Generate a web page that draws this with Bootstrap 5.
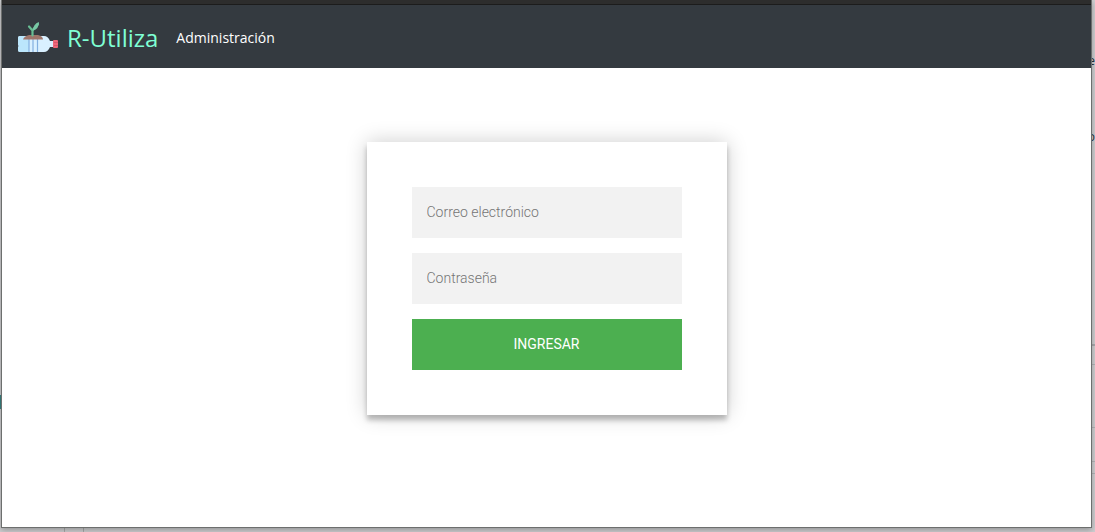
<!DOCTYPE html>
<html lang="es">
<head>
<meta charset="utf-8">
<meta name="viewport" content="width=device-width, initial-scale=1">
<title>R-Utiliza</title>
<link href="https://cdn.jsdelivr.net/npm/bootstrap@5.3.0/dist/css/bootstrap.min.css" rel="stylesheet">
<style>
  body { background: #cfcfd1; font-family: "Open Sans", "Noto Sans", sans-serif; }
  .desk { padding: 0 3px 4px 1px;
    background: linear-gradient(#3a8583, #3a8583) 0 395px / 2px 14px no-repeat,
      linear-gradient(#aaabae, #aaabae) 100% 344px / 4px 2px no-repeat,
      linear-gradient(#b4b4b7, #b4b4b7) 100% 364px / 4px 1px no-repeat,
      linear-gradient(#b4b4b7, #b4b4b7) 100% 427px / 4px 1px no-repeat,
      linear-gradient(#b4b4b7, #b4b4b7) 100% 461px / 4px 1px no-repeat,
      linear-gradient(#b4b4b7, #b4b4b7) 100% 473px / 4px 1px no-repeat,
      linear-gradient(#aaa, #aaa) 64px 100% / 1px 4px no-repeat,
      linear-gradient(#aaa, #aaa) 83px 100% / 1px 4px no-repeat; }
  .desk-letter { right: 0; font-size: 12px; line-height: 16px; color: #25313c; }
  .letter-upper { top: 53px; }
  .letter-lower { top: 129px; }
  .app-window { border: 1px solid #6d6f6e; border-top: 0; box-shadow: 0 2px 6px rgba(0, 0, 0, .3); }
  .title-strip { height: 5px; background: #2d2d2d; border-bottom: 1px solid #1c1c1c; }
  .site-bar { background: #343a40; min-height: 63px; padding: 2px 14px 0; }
  .site-bar .navbar-brand { color: #7fffd4; font-size: 24px; line-height: 36px; gap: 9px; margin-right: 10px; }
  .site-bar .nav-link { color: #fff; font-size: 14px; line-height: 24px; padding: 8px 0; }
  .login-area { padding: 74px 16px; }
  .login-box { width: 360px; max-width: 100%; padding: 45px; gap: 15px; background: #fff;
    font-family: Roboto, sans-serif; box-shadow: 0 0 20px rgba(0, 0, 0, .2), 0 5px 5px rgba(0, 0, 0, .24); }
  .login-box .form-control { background: #f2f2f2; font-size: 14px; font-weight: 300; line-height: 21px; padding: 15px; }
  .login-box .form-control::placeholder { color: #757575; }
  .login-box .btn { --bs-btn-bg: #4caf50; --bs-btn-color: #fff; --bs-btn-hover-bg: #43a047; --bs-btn-hover-color: #fff;
    font-size: 14px; line-height: 21px; padding: 15px; }
</style>
</head>
<body>
<div class="desk min-vh-100 d-flex position-relative">
  <span class="desk-letter letter-upper position-absolute" aria-hidden="true">e</span>
  <span class="desk-letter letter-lower position-absolute" aria-hidden="true">o</span>
  <div class="app-window flex-grow-1 d-flex flex-column bg-white position-relative">
    <div class="title-strip"></div>
    <nav class="site-bar navbar navbar-expand justify-content-start">
      <a class="navbar-brand d-flex align-items-center p-0" href="#">
        <svg width="42" height="34" viewBox="0 0 42 34" aria-hidden="true">
          <path d="M4 15H28Q32 15 34 20H37V26H34Q32 31 28 31H4Q2 31 2 29V26L3 25L2 24V17Q2 15 4 15Z" fill="#d9f0ff"/>
          <path d="M4 15H13V31H4Q2 31 2 29V26L3 25L2 24V17Q2 15 4 15Z" fill="#bbe6fc"/>
          <path d="M13 18V31M17 18V31M21.500 18V31" stroke="#83b0e0" stroke-width="1.200"/>
          <path d="M7 18.500Q8 15 13 14H22Q27 15 27 18.500Z" fill="#9e756b"/>
          <path d="M16.500 14.500V9M13 5.500L16.500 9.500L22 3" stroke="#67bd93" stroke-width="2.200" fill="none" stroke-linecap="round" stroke-linejoin="round"/>
          <path d="M17 9.500Q17 3 23 1Q23 8 17 9.500Z" fill="#78c8a5"/>
          <rect x="37" y="19" width="5" height="8" rx="1" fill="#ef6678"/>
          <path d="M38 21.500H42M38 24.500H42" stroke="#d4566b"/>
        </svg>
        <span>R-Utiliza</span>
      </a>
      <div class="navbar-nav">
        <a class="nav-link" href="#">Administración</a>
      </div>
    </nav>
    <main class="login-area flex-grow-1 d-flex justify-content-center align-items-start">
      <form class="login-box d-flex flex-column">
        <input class="form-control border-0 rounded-0" type="email" placeholder="Correo electrónico" aria-label="Correo electrónico">
        <input class="form-control border-0 rounded-0" type="password" placeholder="Contraseña" aria-label="Contraseña">
        <button class="btn border-0 rounded-0 text-uppercase" type="button">Ingresar</button>
      </form>
    </main>
  </div>
</div>
<script src="https://cdn.jsdelivr.net/npm/bootstrap@5.3.0/dist/js/bootstrap.bundle.min.js"></script>
</body>
</html>
